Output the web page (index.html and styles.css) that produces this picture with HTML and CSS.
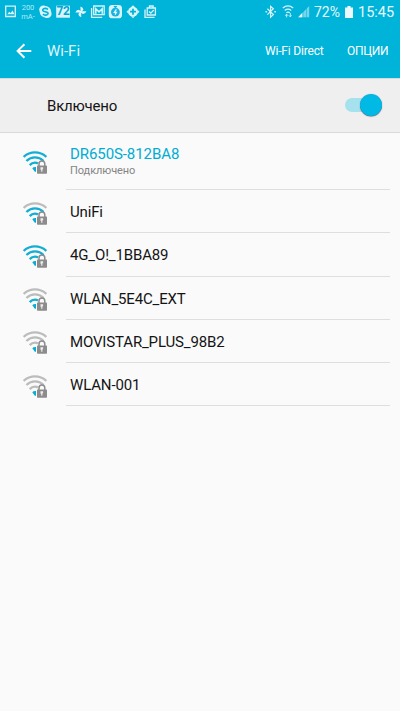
FILE: index.html
```html
<!DOCTYPE html>
<html lang="ru">
<head>
<meta charset="utf-8">
<title>Wi-Fi</title>
<link rel="stylesheet" href="styles.css">
</head>
<body>
<svg class="defs" aria-hidden="true">
  <symbol id="wifi" viewBox="0 0 24 23">
    <g fill="none" stroke-width="2.3">
      <path class="a4" d="M.6 5.9Q5.6 1.4 12 1.4T23.4 5.9"/>
      <path class="a3" d="M3.4 10Q7.2 6.4 12 6.4T20.6 10"/>
      <path class="a2" d="M6.7 14.1Q9 11.6 12 11.6q1.7 0 3 .8"/>
    </g>
    <path class="a1" d="M9.3 17.2q1.2-1.5 3.7-1.2v4.8h-1.2z"/>
    <path d="M16 15.2V13a2.9 2.9 0 0 1 5.8 0v2.2" fill="none" stroke="#8c8c8c" stroke-width="1.5"/>
    <rect x="14" y="14.4" width="10" height="8.4" rx=".7" fill="#8c8c8c"/>
    <path d="M17.5 16.3h2.6v2h-.7v2.5h-1.2v-2h-.7z" fill="#eee"/>
  </symbol>
</svg>
<div class="status">
  <svg class="notes" viewBox="0 0 160 24" fill="none" stroke="#d8f4fb" stroke-width="1.3">
    <path d="M5.7 6.2h9.6v10.3H5.7z"/><path d="M7.2 14.3l2-2.5 1.5 1.2 1.8-2.5 2 3.8z" fill="#d8f4fb" stroke="none"/>
    <circle cx="43.4" cy="9.6" r="4.2" fill="#d8f4fb" stroke="none"/><circle cx="47.3" cy="13.7" r="4.3" fill="#d8f4fb" stroke="none"/><circle cx="45.4" cy="11.7" r="5.7" fill="#d8f4fb" stroke="none"/>
    <path d="M48 9.3q-2.4-1.6-4.5-.5c-2 1.6-.1 2.5 1.8 2.9 2.5.5 3.5 1.5 2.3 2.7q-2 1.6-4.7-.3" stroke="#00b3d9" stroke-width="1.6"/>
    <rect x="56.2" y="5.7" width="13.8" height="12" fill="#d8f4fb" stroke="none"/>
    <g fill="#e5f8fd" stroke="none"><path d="M80.5 12V6.4q2.8.8 2.8 3.2L81.8 12z"/><path d="M80.5 11.2h5.8q-.8 2.8-3.2 2.8l-2.6-1.5z"/><path d="M81.2 11.7v5.6q-2.8-.8-2.8-3.2l1.5-2.4z"/><path d="M81.2 12.5h-5.8q.8-2.8 3.2-2.8l2.6 1.5z"/></g>
    <path d="M93.7 6h10.5v8.7H93.7z"/><path d="M95.8 13.8V8.7l3.2 3.2 3.2-3.2v5.1" stroke-width="1.5"/><path d="M91.6 8v9.3h10.6"/>
    <rect x="108.8" y="4.9" width="13.2" height="13.4" rx="3.4" fill="#d8f4fb" stroke="none"/><circle cx="115.4" cy="12.1" r="4.4" fill="#16b3e2" stroke="none"/><path d="M113.8 6.7h3.2M115.4 6v3" stroke="#16b3e2"/><path d="M116.4 9.4l-2 2.9h2l-1.4 2.4" stroke="#e5f8fd"/>
    <circle cx="133" cy="11.7" r="4.9" fill="#d8f4fb" stroke="none"/><path d="M133 5.2l2 2h-4zM133 18.2l2-2h-4zM126.5 11.7l2-2v4zM139.5 11.7l-2-2v4z" fill="#d8f4fb" stroke="none"/><path d="M133 8.7v6M130 11.7h6" stroke="#00b3d9" stroke-width="1.8"/>
    <path d="M147.2 8h8.2v7h-8.2zM149.5 7.7V6h3.6v1.7"/><path d="M149 11.5l1.8 1.7 3-3.2"/><path d="M145 9.5v7.8h9.5"/>
  </svg>
  <span class="meter"><span>200</span><span>mA-</span></span>
  <span class="temp">72</span>
  <svg class="radio" viewBox="0 0 46 24" fill="none" stroke="#d8f4fb">
    <path d="M2.4 8.8l6 5.8-2.8 2.5V6.3l2.8 2.5-6 5.8" stroke-width="1.2"/><path d="M.5 11.7h1.6M9.3 11.7h1.6" stroke-width="1.5"/>
    <path d="M17.8 8Q23 3.7 28.2 8" stroke-width="1.2"/><path d="M19.8 10.4Q23 7.9 26.2 10.4" stroke-width="1.3"/><path d="M21.4 12.8q1.6-1.4 3.4 0" stroke-width="1.2"/><path d="M21.6 17.4v-3.2M20.3 15.7l1.3-1.5 1.3 1.5M25.3 13v3.8M24 15.4l1.3 1.5 1.3-1.5" stroke-width=".9"/>
    <path d="M33.2 17.2L44.2 6v11.2z" fill="#74d5eb" stroke="none"/><path d="M33.2 17.2l4-4.1v4.1z" fill="#e5f8fd" stroke="none"/><path d="M38 6v11.2M41.5 6v11.2" stroke="#00b3d9" stroke-width=".5"/>
  </svg>
  <span class="percent">72%</span>
  <svg class="battery" viewBox="0 0 8 12"><path d="M2.4 0h3.2v1.4H8V12H0V1.4h2.4z" fill="#e9f9fd"/></svg>
  <span class="clock">15:45</span>
</div>
<header class="bar">
  <svg class="back" viewBox="0 0 16 16" fill="none" stroke="#fff" stroke-width="2"><path d="M15.3 7.9H1.7M8.4 1.2L1.6 7.9l6.8 6.8"/></svg>
  <h1>Wi-Fi</h1>
  <span class="direct">Wi-Fi Direct</span>
  <span class="options">ОПЦИИ</span>
</header>
<section class="power"><span>Включено</span><span class="track"><span class="thumb"></span></span></section>
<ul class="list">
  <li class="linked"><svg class="wifi s4"><use href="#wifi"/></svg><div class="net"><span class="name">DR650S-812BA8</span><span class="state">Подключено</span></div></li>
  <li><svg class="wifi s3"><use href="#wifi"/></svg><div class="net"><span class="name">UniFi</span></div></li>
  <li><svg class="wifi s4"><use href="#wifi"/></svg><div class="net"><span class="name">4G_O!_1BBA89</span></div></li>
  <li><svg class="wifi s2"><use href="#wifi"/></svg><div class="net"><span class="name">WLAN_5E4C_EXT</span></div></li>
  <li><svg class="wifi s1"><use href="#wifi"/></svg><div class="net"><span class="name">MOVISTAR_PLUS_98B2</span></div></li>
  <li><svg class="wifi s1"><use href="#wifi"/></svg><div class="net"><span class="name">WLAN-001</span></div></li>
</ul>
</body>
</html>
```
FILE: styles.css
```css
* { box-sizing: border-box; }
body { margin: 0; width: 400px; height: 711px; overflow: hidden; background: #fafafa; font-family: Roboto, "Noto Sans", sans-serif; color: #141414; }
.defs { position: absolute; width: 0; height: 0; }
.status { position: relative; display: flex; height: 24px; align-items: center; background: #00b3d9; color: #e5f8fd; white-space: nowrap; }
.notes { width: 160px; height: 24px; flex: none; }
.meter { position: absolute; left: 20px; top: 3px; width: 16px; display: flex; flex-direction: column; align-items: center; font-size: 7.5px; line-height: 9px; color: #b5eaf5; }
.temp { position: absolute; left: 56px; top: 5px; width: 14px; text-align: center; font-size: 12px; line-height: 13px; font-weight: 700; letter-spacing: -.4px; color: #00a8d0; }
.radio { width: 46px; height: 24px; margin-left: 105px; flex: none; }
.percent { margin-left: 3px; width: 27px; font-size: 14px; }
.battery { width: 8px; height: 12px; margin-left: 4px; flex: none; }
.clock { margin-left: 5px; font-size: 14.5px; }
.bar { display: flex; height: 54px; align-items: center; background: #00b3d9; color: #fff; white-space: nowrap; }
.back { width: 16px; height: 16px; margin-left: 16px; }
h1 { margin: 0 0 0 15px; width: 218px; font-size: 15px; font-weight: 400; color: #def5fb; }
.direct { width: 82px; font-size: 12px; letter-spacing: -.18px; }
.options { font-size: 12px; letter-spacing: -.3px; }
.power { display: flex; height: 55px; align-items: center; justify-content: space-between; padding: 0 18px 0 47px; background: #efefef; border-top: 1px solid #d5dcde; border-bottom: 1px solid #d9d9d9; font-size: 15px; letter-spacing: -.2px; }
.power .track { margin-top: -2px; }
.track { display: flex; justify-content: flex-end; align-items: center; width: 37px; height: 14px; border-radius: 7px; background: #a6e1ee; }
.thumb { width: 22px; height: 22px; flex: none; border-radius: 50%; background: #00b9e4; box-shadow: 0 .5px 1px #557; }
.list { margin: 0; padding: 0; list-style: none; }
li { display: flex; height: 43.3px; padding: 0 10px 0 23px; }
.linked { height: 57px; }
.wifi { width: 24px; height: 23px; margin: 11.5px 20px 0 0; flex: none; }
.linked .wifi { margin-top: 17.5px; }
.net { display: flex; flex: 1; flex-direction: column; justify-content: center; padding: 2px 0 0 4px; margin-left: -1px; border-bottom: 1px solid #dedede; line-height: 18px; }
.linked .net { padding-top: 2px; }
.name { font-size: 15px; letter-spacing: -.15px; }
.linked .name { color: #00acd3; letter-spacing: -.08px; }
.state { font-size: 11px; line-height: 16px; color: #858585; letter-spacing: -.08px; }
.a1 { fill: #09add4; }
.wifi { --on: #14aed3; --off: #bcbcbc; --l2: var(--off); --l3: var(--off); --l4: var(--off); }
.s4 { --l2: var(--on); --l3: var(--on); --l4: var(--on); }
.s3 { --l2: var(--on); --l3: var(--on); }
.s2 { --l2: var(--on); }
.a2 { stroke: var(--l2); }
.a3 { stroke: var(--l3); }
.a4 { stroke: var(--l4); }
```
